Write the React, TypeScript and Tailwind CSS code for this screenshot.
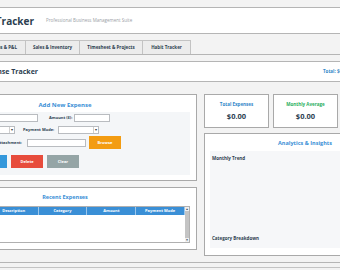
const tabs = [
  { label: 'Expenses & P&L', w: 'w-[93px] justify-end pr-[8px] border-l' },
  { label: 'Sales & Inventory', w: 'w-[54px] justify-center' },
  { label: 'Timesheet & Projects', w: 'w-[63px] justify-center' },
  { label: 'Habit Tracker', w: 'w-[48px] justify-center' },
]

const columns = ['Date', 'Description', 'Category', 'Amount', 'Payment Mode']

function Entry({ className }: { className: string }) {
  return <div className={`h-[8px] shrink-0 bg-white border border-[#b9bcc0] ${className}`} />
}

function Combo({ className }: { className: string }) {
  return (
    <div className={`h-[8px] shrink-0 bg-white border border-[#b9bcc0] flex justify-end ${className}`}>
      <div className="w-[5px] h-full border-l border-[#d0d0d0] flex items-center justify-center text-[4px] leading-none text-[#333]">▾</div>
    </div>
  )
}

function Label({ text, className }: { text: string; className: string }) {
  return <div className={`shrink-0 text-[4px] font-bold leading-none whitespace-nowrap ${className}`}>{text}</div>
}

function Stat({ title, color }: { title: string; color: string }) {
  return (
    <div className="w-[65px] h-[34px] shrink-0 bg-white border border-[#a9a9a9] flex flex-col items-center pt-[7px]">
      <div className={`text-[4.5px] font-bold leading-none ${color}`}>{title}</div>
      <div className="mt-[6px] text-[7.5px] font-bold leading-none text-[#2c3e50]">$0.00</div>
    </div>
  )
}

export default function App() {
  return (
    <div className="w-[340px] h-[270px] overflow-hidden bg-[#f3f3f3] font-['Open_Sans',sans-serif] text-[#2c3e50]">
      <div className="w-[520px] -ml-[67px] pt-[7px]">
        {/* app header */}
        <div className="h-[27px] bg-white border border-[#b5b5b5] flex items-center">
          <div className="w-[100px] shrink-0 text-right whitespace-nowrap text-[10px] font-bold leading-none">Business Tracker</div>
          <div className="ml-[12px] text-[4.5px] text-[#9aa0a6] whitespace-nowrap leading-none">Professional Business Management Suite</div>
        </div>

        {/* notebook tabs */}
        <div className="mt-[6px] h-[15px] flex border-b border-[#b5b5b5]">
          {tabs.map((t) => (
            <div key={t.label} className={`${t.w} h-[14px] shrink-0 flex items-center bg-[#ececec] border-t border-r border-[#c3c3c3] text-[4.5px] font-bold whitespace-nowrap leading-none`}>
              {t.label}
            </div>
          ))}
        </div>

        {/* section header */}
        <div className="mt-[6px] h-[21px] bg-white border border-[#b5b5b5] flex items-center">
          <div className="w-[104px] shrink-0 text-right whitespace-nowrap text-[7px] font-bold leading-none">Expense Tracker</div>
          <div className="ml-[285px] text-[4.5px] font-bold text-[#2f86c8] whitespace-nowrap leading-none">Total: $0.00</div>
        </div>

        <div className="mt-[12px] flex gap-[7px] items-start">
          {/* left column */}
          <div className="w-[264px] shrink-0 flex flex-col gap-[6px]">
            <div className="h-[87px] bg-white border border-[#a9a9a9]">
              <div className="h-[17px] flex items-center justify-center pt-[2px] text-[6px] font-bold text-[#3a8fd6] leading-none">Add New Expense</div>
              <div className="mx-[6px] h-[63px] bg-[#f4f6f8] pt-[2px]">
                <div className="h-[8px] flex items-center">
                  <Label text="Date:" className="w-[38px] text-right" />
                  <Entry className="ml-[2px] w-[58px]" />
                  <Label text="Amount ($):" className="ml-[11px] w-[23px]" />
                  <Entry className="ml-[2px] w-[36px]" />
                </div>
                <div className="mt-[4px] h-[8px] flex items-center">
                  <Label text="Category:" className="w-[36px] text-right" />
                  <Combo className="ml-[2px] w-[37px]" />
                  <Label text="Payment Mode:" className="ml-[8px] w-[30px]" />
                  <Combo className="ml-[5px] w-[41px]" />
                </div>
                <div className="mt-[2px] h-[13px] flex items-center">
                  <Label text="Attachment:" className="w-[82px] text-right" />
                  <Entry className="ml-[5px] w-[59px]" />
                  <button className="ml-[3px] w-[32px] h-[13px] shrink-0 bg-[#f39c12] text-white text-[4px] font-bold leading-none">Browse</button>
                </div>
                <div className="mt-[6px] h-[13px] flex items-center gap-[4px] ml-[35px]">
                  <button className="w-[32px] h-[13px] bg-[#3498db] text-white text-[4px] font-bold leading-none">Add</button>
                  <button className="w-[32px] h-[13px] bg-[#e74c3c] text-white text-[4px] font-bold leading-none">Delete</button>
                  <button className="w-[32px] h-[13px] bg-[#95a5a6] text-white text-[4px] font-bold leading-none">Clear</button>
                </div>
              </div>
            </div>

            <div className="h-[63px] bg-white border border-[#a9a9a9]">
              <div className="h-[18px] flex items-center justify-center pt-[2px] text-[5.5px] font-bold text-[#3a8fd6] leading-none">Recent Expenses</div>
              <div className="mx-[6px] h-[37px] flex border border-[#b0b0b0]">
                <div className="w-[244px] flex flex-col">
                  <div className="h-[8px] flex bg-[#3a8fd6]">
                    {columns.map((c) => (
                      <div key={c} className="w-[49px] h-full flex items-center justify-center border-r border-[#9cc7ec] text-white text-[4px] font-bold leading-none whitespace-nowrap">{c}</div>
                    ))}
                  </div>
                  <div className="flex-1 bg-white" />
                </div>
                <div className="w-[5px] flex flex-col bg-[#c4c4c4]">
                  <div className="h-[4px] bg-[#f0f0f0] flex items-center justify-center text-[3px] leading-none">▲</div>
                  <div className="flex-1" />
                  <div className="h-[4px] bg-[#f0f0f0] flex items-center justify-center text-[3px] leading-none">▼</div>
                </div>
              </div>
            </div>
          </div>

          {/* right column */}
          <div className="w-[202px] shrink-0 flex flex-col gap-[5px]">
            <div className="flex gap-[4px]">
              <Stat title="Total Expenses" color="text-[#2f86c8]" />
              <Stat title="Monthly Average" color="text-[#27ae60]" />
              <Stat title="Categories" color="text-[#e67e22]" />
            </div>
            <div className="h-[123px] bg-white border border-[#a9a9a9]">
              <div className="h-[17px] flex items-center justify-center pt-[2px] text-[5.5px] font-bold text-[#3a8fd6] leading-none">Analytics &amp; Insights</div>
              <div className="mx-[5px] h-[97px] bg-[#f6f7f9] flex flex-col justify-between pt-[5px] pb-[8px] pl-[2px]">
                <div className="text-[4.5px] font-bold leading-none">Monthly Trend</div>
                <div className="text-[4.5px] font-bold leading-none">Category Breakdown</div>
              </div>
            </div>
          </div>
        </div>

        <div className="mt-[6px] border-t border-[#b5b5b5]" />
        <div className="mt-[4px] border-t border-[#c3c3c3]" />
      </div>
    </div>
  )
}
